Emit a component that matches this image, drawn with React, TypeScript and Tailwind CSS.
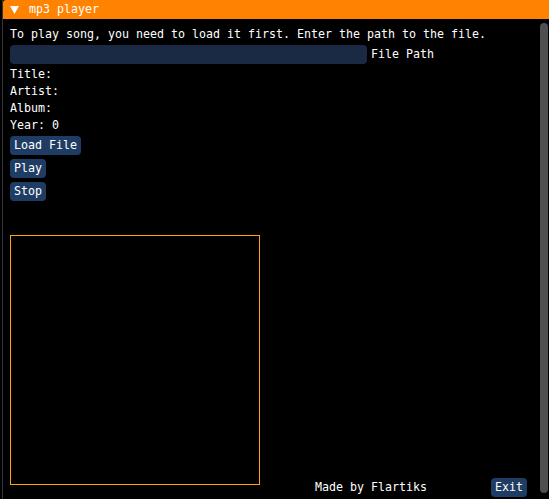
const mono = { fontFamily: '"DejaVu Sans Mono", "Liberation Mono", monospace' };

const Button = ({ label }: { label: string }) => (
  <button
    type="button"
    className="h-[19px] rounded-[4px] bg-[#1f3d64] px-[4px] text-[11.63px] leading-[19px] text-white"
  >
    {label}
  </button>
);

const App = () => {
  return (
    <div className="h-[499px] w-[549px] overflow-hidden bg-black text-white" style={mono}>
      <div className="ml-[2px] flex h-[499px] flex-col border-l border-[#34343c] text-[11.63px] leading-[13px]">
        <div className="flex h-[19px] shrink-0 items-center rounded-tl-[3px] bg-[#ff8300]">
          <svg width="9" height="8" viewBox="0 0 9 8" className="ml-[7px]">
            <path d="M0 0 H9 L4.5 8 Z" fill="#fff" />
          </svg>
          <span className="ml-[10px]">mp3 player</span>
        </div>
        <div className="flex min-h-0 flex-1">
          <div className="flex flex-1 flex-col pl-[7px] pt-[9px]">
            <p>To play song, you need to load it first. Enter the path to the file.</p>
            <div className="mt-[4px] flex items-center gap-[4px]">
              <div className="h-[19px] w-[357px] rounded-[4px] bg-[#1a2a45]" />
              <span>File Path</span>
            </div>
            <div className="mt-[4px] flex flex-col gap-[4px]">
              <p>Title:</p>
              <p>Artist:</p>
              <p>Album:</p>
              <p>Year: 0</p>
            </div>
            <div className="mt-[4px] flex flex-col items-start gap-[4px]">
              <Button label="Load File" />
              <Button label="Play" />
              <Button label="Stop" />
            </div>
            <div className="mt-[34px] h-[250px] w-[250px] border border-[#ffa500]" />
            <div className="mt-[-7px] flex h-[19px] items-center">
              <span className="ml-[305px]">Made by Flartiks</span>
              <span className="ml-[64px]">
                <Button label="Exit" />
              </span>
            </div>
          </div>
          <div className="w-[9px] shrink-0 pr-[1px] pt-[4px]">
            <div className="h-[470px] w-[8px] rounded-full bg-[#4f4f4f]" />
          </div>
        </div>
      </div>
    </div>
  );
};

export default App;
